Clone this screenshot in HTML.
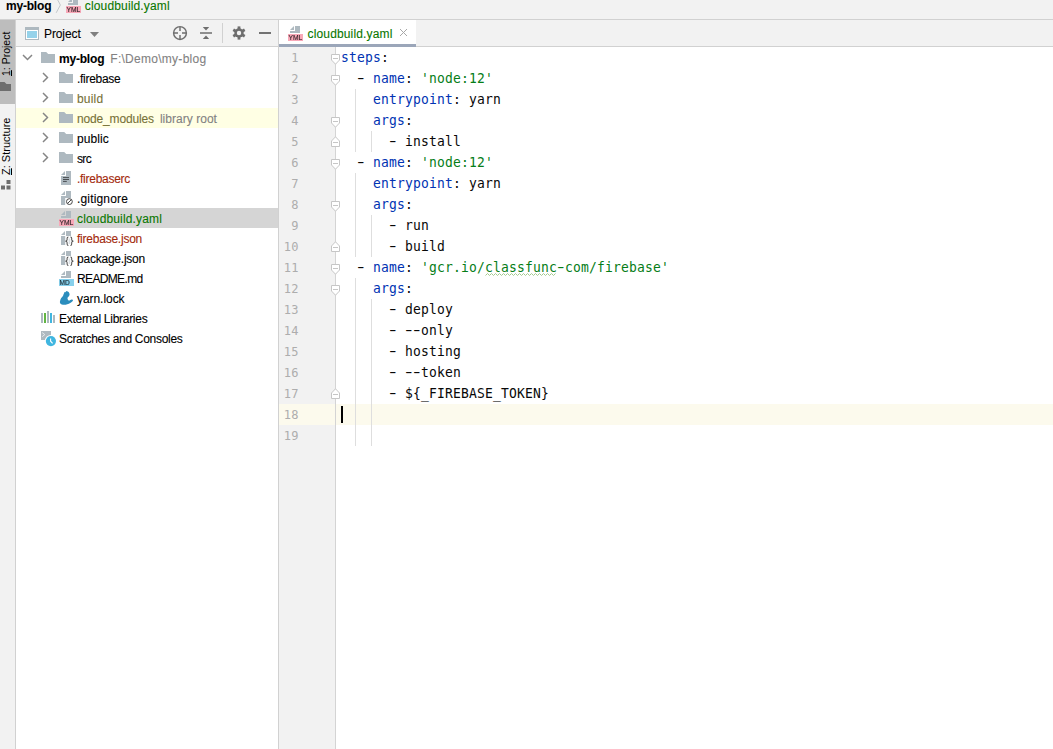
<!DOCTYPE html>
<html><head><meta charset="utf-8"><title>cloudbuild.yaml</title>
<style>
*{box-sizing:border-box}
html,body{margin:0;padding:0}
body{width:1053px;height:749px;overflow:hidden;background:#fff;position:relative;font-family:"Liberation Sans",sans-serif;font-size:12px;color:#000}
.abs,.ic{position:absolute}
.ic{display:block;overflow:visible}
#nav{position:absolute;left:0;top:0;width:1053px;height:19px;background:#f2f2f2}
#navb{position:absolute;left:0;top:19px;width:1053px;height:1px;background:#d1d1d1}
.t{position:absolute;white-space:pre;line-height:16px;height:16px;-webkit-text-stroke:0.1px currentColor}
#strip{position:absolute;left:0;top:20px;width:15px;height:729px;background:#f2f2f2}
#stripb{position:absolute;left:15px;top:20px;width:1px;height:729px;background:#d1d1d1}
#sel1{position:absolute;left:0;top:20px;width:15px;height:84px;background:#bdbdbd}
.vt{position:absolute;white-space:pre;transform-origin:0 0;transform:rotate(-90deg);line-height:14px;height:14px;font-size:10.5px}
#ph{position:absolute;left:16px;top:20px;width:262px;height:26px;background:#f2f2f2}
#phb{position:absolute;left:16px;top:46px;width:262px;height:1px;background:#d1d1d1}
#pr{position:absolute;left:278px;top:20px;width:1px;height:729px;background:#d1d1d1}
.row{position:absolute;left:16px;width:262px;height:20px}
#tabs{position:absolute;left:279px;top:20px;width:774px;height:26px;background:#f2f2f2}
#tabsb{position:absolute;left:279px;top:46px;width:774px;height:1px;background:#d1d1d1}
#tab{position:absolute;left:279px;top:20px;width:137px;height:24px;background:#fff}
#tabu{position:absolute;left:279px;top:44px;width:137px;height:3px;background:#9ba6b9}
#gut{position:absolute;left:279px;top:47px;width:56px;height:702px;background:#f2f2f2}
#gutb{position:absolute;left:335px;top:47px;width:1px;height:702px;background:#d4d4d4}
#cur{position:absolute;left:279px;top:404px;width:774px;height:21px;background:#fcfaed}
.ln{position:absolute;left:279px;width:19.7px;text-align:right;font-family:"DejaVu Sans Mono","Liberation Mono",monospace;font-size:12px;letter-spacing:0.2px;line-height:21px;height:21px;color:#adadad;white-space:pre;padding-top:0.5px}
.cl{position:absolute;left:341px;font-family:"DejaVu Sans Mono","Liberation Mono",monospace;font-size:13px;line-height:21px;height:21px;white-space:pre;letter-spacing:0.174px;color:#080808;transform:scaleY(1.13);transform-origin:0 15px}
.h{display:inline-block;transform:scaleX(1.6)}
.k{color:#0033b3}.s{color:#067d17}
.g{position:absolute;width:1px;background:#dedede}
.wavy{text-decoration:underline wavy #b9c6a0;text-decoration-thickness:1px;text-underline-offset:2px}
</style></head><body>

<div id="nav"></div><div id="navb"></div>
<div class="t" style="left:6px;top:-2px;font-weight:bold;letter-spacing:-0.2px">my-blog</div>
<svg class="ic" style="left:55px;top:0" width="8" height="14" viewBox="0 0 8 14"><path d="M1.2 -2.8L5.4 5L1.2 12.8" fill="none" stroke="#c4c8cb" stroke-width="1"/></svg>
<svg class="ic" style="left:65px;top:-3px;will-change:transform" width="16" height="16" viewBox="0 0 16 16"><path d="M8 1H13V8H3V6H8Z" fill="#aeb9c0"/><path d="M7 1V5H3Z" fill="#aeb9c0"/><rect x="1" y="9" width="15" height="7" fill="#f8a8b8"/><text x="1.5" y="15.1" font-family='"Liberation Sans", sans-serif' font-size="7.3" fill="#33252a" stroke="#33252a" stroke-width=".15" style="opacity:.999" textLength="13.8" lengthAdjust="spacingAndGlyphs">YML</text></svg>
<div class="t" style="left:84.8px;top:-2px;color:#0a7700;letter-spacing:0.153px">cloudbuild.yaml</div>
<div id="strip"></div><div id="sel1"></div><div id="stripb"></div>
<div class="vt" style="left:-1px;top:76px"><u>1</u>: Project</div>
<svg class="ic" style="left:0;top:82px" width="11" height="9" viewBox="0 0 11 9"><path d="M0 0H4.5L6.5 2H11V9H0Z" fill="#6e6e6e"/></svg>
<div class="vt" style="left:-1px;top:174.5px;font-size:11px"><u>Z</u>: Structure</div>
<svg class="ic" style="left:1px;top:180px" width="10" height="10" viewBox="0 0 10 10"><rect x="5.5" y="0" width="4" height="4" fill="#6e6e6e"/><rect x="0" y="5.5" width="4" height="4" fill="#6e6e6e"/><rect x="5.5" y="5.5" width="4" height="4" fill="#6e6e6e"/></svg>
<div id="ph"></div><div id="phb"></div><div id="pr"></div>
<svg class="ic" style="left:25px;top:27px" width="14" height="13" viewBox="0 0 14 13"><rect x="0" y="0" width="14" height="13" fill="#aeb9c0"/><rect x="1" y="3" width="12" height="9" fill="#fff"/><rect x="2" y="4" width="10" height="7" fill="#95d2ea"/></svg>
<div class="t" style="left:44px;top:26px;letter-spacing:-0.1px">Project</div>
<svg class="ic" style="left:89.5px;top:32px" width="9" height="5" viewBox="0 0 9 5"><path d="M0 0H9L4.5 5Z" fill="#7f7f7f"/></svg>
<svg class="ic" style="left:172px;top:25px" width="16" height="16" viewBox="0 0 16 16"><circle cx="8" cy="8" r="6.4" fill="none" stroke="#6e6e6e" stroke-width="1.45"/><path d="M8 2V6M8 10V14M2 8H6M10 8H14" stroke="#6e6e6e" stroke-width="1.45"/></svg>
<svg class="ic" style="left:198px;top:25px" width="16" height="16" viewBox="0 0 16 16"><path d="M2 8H14" stroke="#6e6e6e" stroke-width="1.5"/><path d="M4.8 2H11.2L8 5.4Z" fill="#6e6e6e"/><path d="M4.8 14H11.2L8 10.6Z" fill="#6e6e6e"/></svg>
<div class="abs" style="left:222px;top:23px;width:1px;height:20px;background:#d1d1d1"></div>
<svg class="ic" style="left:231px;top:25px" width="16" height="16" viewBox="0 0 16 16"><g fill="#6e6e6e"><circle cx="8" cy="8" r="4.7"/><rect x="6.6" y="1.4" width="2.8" height="3" transform="rotate(0 8 8)"/><rect x="6.6" y="1.4" width="2.8" height="3" transform="rotate(60 8 8)"/><rect x="6.6" y="1.4" width="2.8" height="3" transform="rotate(120 8 8)"/><rect x="6.6" y="1.4" width="2.8" height="3" transform="rotate(180 8 8)"/><rect x="6.6" y="1.4" width="2.8" height="3" transform="rotate(240 8 8)"/><rect x="6.6" y="1.4" width="2.8" height="3" transform="rotate(300 8 8)"/></g><circle cx="8" cy="8" r="2.2" fill="#f2f2f2"/></svg>
<div class="abs" style="left:259px;top:32px;width:12px;height:2px;background:#727272"></div>
<svg class="ic" style="left:22px;top:54px" width="11" height="7" viewBox="0 0 11 7"><path d="M1 1L5.5 5.5L10 1" fill="none" stroke="#858585" stroke-width="1.45"/></svg>
<svg class="ic" style="left:41px;top:52px" width="14" height="11" viewBox="0 0 14 11"><path d="M0 0H5.2L7.2 2H14V11H0Z" fill="#aeb9c0"/></svg>
<div class="t" style="left:59px;top:51px;color:#000;font-weight:bold;letter-spacing:-0.2px">my-blog</div>
<div class="t" style="left:110.3px;top:51px;color:#828282;letter-spacing:0.273px">F:\Demo\my-blog</div>
<svg class="ic" style="left:42px;top:72px" width="7" height="11" viewBox="0 0 7 11"><path d="M1 1L5.5 5.5L1 10" fill="none" stroke="#858585" stroke-width="1.45"/></svg>
<svg class="ic" style="left:59px;top:72px" width="14" height="11" viewBox="0 0 14 11"><path d="M0 0H5.2L7.2 2H14V11H0Z" fill="#aeb9c0"/></svg>
<div class="t" style="left:77px;top:71px;color:#000;letter-spacing:-0.289px">.firebase</div>
<svg class="ic" style="left:42px;top:92px" width="7" height="11" viewBox="0 0 7 11"><path d="M1 1L5.5 5.5L1 10" fill="none" stroke="#858585" stroke-width="1.45"/></svg>
<svg class="ic" style="left:59px;top:92px" width="14" height="11" viewBox="0 0 14 11"><path d="M0 0H5.2L7.2 2H14V11H0Z" fill="#aeb9c0"/></svg>
<div class="t" style="left:77px;top:91px;color:#777238;letter-spacing:0.18px">build</div>
<div class="row" style="top:108px;background:#ffffe4"></div>
<svg class="ic" style="left:42px;top:112px" width="7" height="11" viewBox="0 0 7 11"><path d="M1 1L5.5 5.5L1 10" fill="none" stroke="#858585" stroke-width="1.45"/></svg>
<svg class="ic" style="left:59px;top:112px" width="14" height="11" viewBox="0 0 14 11"><path d="M0 0H5.2L7.2 2H14V11H0Z" fill="#aeb9c0"/></svg>
<div class="t" style="left:77px;top:111px;color:#777238;letter-spacing:-0.15px">node_modules</div>
<div class="t" style="left:159.9px;top:111px;color:#828282;letter-spacing:0.033px">library root</div>
<svg class="ic" style="left:42px;top:132px" width="7" height="11" viewBox="0 0 7 11"><path d="M1 1L5.5 5.5L1 10" fill="none" stroke="#858585" stroke-width="1.45"/></svg>
<svg class="ic" style="left:59px;top:132px" width="14" height="11" viewBox="0 0 14 11"><path d="M0 0H5.2L7.2 2H14V11H0Z" fill="#aeb9c0"/></svg>
<div class="t" style="left:77px;top:131px;color:#000;letter-spacing:0.1px">public</div>
<svg class="ic" style="left:42px;top:152px" width="7" height="11" viewBox="0 0 7 11"><path d="M1 1L5.5 5.5L1 10" fill="none" stroke="#858585" stroke-width="1.45"/></svg>
<svg class="ic" style="left:59px;top:152px" width="14" height="11" viewBox="0 0 14 11"><path d="M0 0H5.2L7.2 2H14V11H0Z" fill="#aeb9c0"/></svg>
<div class="t" style="left:77px;top:151px;color:#000;letter-spacing:-0.667px">src</div>
<svg class="ic" style="left:58px;top:170px" width="16" height="16" viewBox="0 0 16 16"><path d="M8 1H13V15H3V6H8Z" fill="#aeb9c0"/><path d="M7 1V5H3Z" fill="#aeb9c0"/><path d="M5 7.6H11M5 9.5H11M5 11.4H8.8" stroke="#2f3336" stroke-width="1" opacity=".8"/></svg>
<div class="t" style="left:77px;top:171px;color:#a32a0c;letter-spacing:-0.273px">.firebaserc</div>
<svg class="ic" style="left:58px;top:190px" width="16" height="16" viewBox="0 0 16 16"><path d="M8 1H13V8H7.2V15H3V6H8Z" fill="#aeb9c0"/><path d="M7 1V5H3Z" fill="#aeb9c0"/><circle cx="11.4" cy="11.6" r="2.9" fill="#fff" stroke="#454545" stroke-width="1"/><path d="M9.4 13.6L13.4 9.6" stroke="#454545" stroke-width="1"/></svg>
<div class="t" style="left:77px;top:191px;color:#000;letter-spacing:0.16px">.gitignore</div>
<div class="row" style="top:208px;background:#d5d5d5"></div>
<svg class="ic" style="left:58px;top:210px;will-change:transform" width="16" height="16" viewBox="0 0 16 16"><path d="M8 1H13V8H3V6H8Z" fill="#aeb9c0"/><path d="M7 1V5H3Z" fill="#aeb9c0"/><rect x="1" y="9" width="15" height="7" fill="#f8a8b8"/><text x="1.5" y="15.1" font-family='"Liberation Sans", sans-serif' font-size="7.3" fill="#33252a" stroke="#33252a" stroke-width=".15" style="opacity:.999" textLength="13.8" lengthAdjust="spacingAndGlyphs">YML</text></svg>
<div class="t" style="left:77px;top:211px;color:#0a7700;letter-spacing:0.153px">cloudbuild.yaml</div>
<svg class="ic" style="left:58px;top:230px" width="17" height="16" viewBox="0 0 17 16"><path d="M8 1H13V6H7.2V15H3V6H8Z" fill="#aeb9c0"/><path d="M7 1V5H3Z" fill="#aeb9c0"/><rect x="10.6" y="8.4" width="1.6" height="5.6" fill="#aeb9c0" opacity=".45"/><path d="M10.4 6.9C9.4 6.9 9.1 7.4 9.1 8.3V9.8C9.1 10.6 8.6 11.1 7.4 11.2C8.6 11.3 9.1 11.8 9.1 12.6V14.1C9.1 15 9.4 15.5 10.4 15.5M12.4 6.9C13.4 6.9 13.7 7.4 13.7 8.3V9.8C13.7 10.6 14.2 11.1 15.4 11.2C14.2 11.3 13.7 11.8 13.7 12.6V14.1C13.7 15 13.4 15.5 12.4 15.5" fill="none" stroke="#505050" stroke-width="1.05"/></svg>
<div class="t" style="left:77px;top:231px;color:#a32a0c;letter-spacing:-0.231px">firebase.json</div>
<svg class="ic" style="left:58px;top:250px" width="17" height="16" viewBox="0 0 17 16"><path d="M8 1H13V6H7.2V15H3V6H8Z" fill="#aeb9c0"/><path d="M7 1V5H3Z" fill="#aeb9c0"/><rect x="10.6" y="8.4" width="1.6" height="5.6" fill="#aeb9c0" opacity=".45"/><path d="M10.4 6.9C9.4 6.9 9.1 7.4 9.1 8.3V9.8C9.1 10.6 8.6 11.1 7.4 11.2C8.6 11.3 9.1 11.8 9.1 12.6V14.1C9.1 15 9.4 15.5 10.4 15.5M12.4 6.9C13.4 6.9 13.7 7.4 13.7 8.3V9.8C13.7 10.6 14.2 11.1 15.4 11.2C14.2 11.3 13.7 11.8 13.7 12.6V14.1C13.7 15 13.4 15.5 12.4 15.5" fill="none" stroke="#505050" stroke-width="1.05"/></svg>
<div class="t" style="left:77px;top:251px;color:#000;letter-spacing:-0.225px">package.json</div>
<svg class="ic" style="left:58px;top:270px;will-change:transform" width="16" height="16" viewBox="0 0 16 16"><path d="M8 1H13V8H3V6H8Z" fill="#aeb9c0"/><path d="M7 1V5H3Z" fill="#aeb9c0"/><rect x="1" y="9" width="15" height="7" fill="#87d0ec"/><text x="1.5" y="15.1" font-family='"Liberation Sans", sans-serif' font-size="7.3" fill="#1e2b32" stroke="#1e2b32" stroke-width=".15" style="opacity:.999" textLength="10.2" lengthAdjust="spacingAndGlyphs">MD</text></svg>
<div class="t" style="left:77px;top:271px;color:#000;letter-spacing:-0.644px">README.md</div>
<svg class="ic" style="left:58px;top:290px" width="16" height="16" viewBox="0 0 16 16"><path d="M8.7 1L9.7 1.6C10.5 1.8 11 2.3 11.2 2.9C11.7 3.7 11.7 4.7 11.3 5.5C10.9 6.3 10.1 7 9.5 7.7C9.4 8.8 9.8 9.8 10.6 10.4C11.4 10.8 12.6 9.9 13.6 9.5C14.3 9.3 15 9.6 15 10.3C15 10.9 14.6 11.4 14 11.8C13.2 12.4 12.2 13 11.3 13.4C10 14 8.4 14.6 6.5 14.7C5 14.8 3.4 14.6 2.6 13.8C1.9 13 1.8 12 2 11.2C2.2 10 2.7 9 3.2 8.1C3.8 7.2 4.6 6.4 5.2 5.4C5.4 4.6 5.6 3.6 6.2 2.9L6.4 1.9L7.4 2.2C7.8 1.8 8.2 1.4 8.7 1Z" fill="#2b8dbd"/></svg>
<div class="t" style="left:77px;top:291px;color:#000;letter-spacing:-0.056px">yarn.lock</div>
<svg class="ic" style="left:40px;top:310px" width="16" height="16" viewBox="0 0 16 16"><rect x="1" y="3" width="2" height="10" fill="#aeb9c0"/><rect x="4" y="3" width="2" height="10" fill="#62b543"/><rect x="7" y="1" width="2" height="12" fill="#aeb9c0"/><rect x="10" y="3" width="2" height="10" fill="#40b6e0"/><rect x="13" y="5" width="2" height="8" fill="#aeb9c0"/></svg>
<div class="t" style="left:59px;top:311px;color:#000;letter-spacing:-0.278px">External Libraries</div>
<svg class="ic" style="left:40px;top:330px" width="17" height="17" viewBox="0 0 17 17"><rect x="1" y="1" width="10" height="9" fill="#aeb9c0"/><path d="M2.2 2.6L4.8 4.6L2.2 6.6" fill="none" stroke="#e8ecee" stroke-width="1"/><circle cx="10.9" cy="11.1" r="6.1" fill="#fff"/><circle cx="10.9" cy="11.1" r="5.1" fill="#40b6e0"/><path d="M10.6 8.4V11.2L12.6 13.4" fill="none" stroke="#fff" stroke-width="1.1"/></svg>
<div class="t" style="left:59px;top:331px;color:#000;letter-spacing:-0.3px">Scratches and Consoles</div>
<div id="tabs"></div><div id="tabsb"></div><div id="tab"></div><div id="tabu"></div>
<svg class="ic" style="left:287px;top:25px;will-change:transform" width="16" height="16" viewBox="0 0 16 16"><path d="M8 1H13V8H3V6H8Z" fill="#aeb9c0"/><path d="M7 1V5H3Z" fill="#aeb9c0"/><rect x="1" y="9" width="15" height="7" fill="#f8a8b8"/><text x="1.5" y="15.1" font-family='"Liberation Sans", sans-serif' font-size="7.3" fill="#33252a" stroke="#33252a" stroke-width=".15" style="opacity:.999" textLength="13.8" lengthAdjust="spacingAndGlyphs">YML</text></svg>
<div class="t" style="left:307.5px;top:26px;color:#0a7700;letter-spacing:0.153px">cloudbuild.yaml</div>
<svg class="ic" style="left:399px;top:28px" width="9" height="9" viewBox="0 0 9 9"><path d="M1 1L8 8M8 1L1 8" stroke="#a8a8a8" stroke-width="1"/></svg>
<div id="gut"></div><div id="cur"></div><div id="gutb"></div>
<div class="ln" style="top:47px">1</div>
<div class="cl" style="top:47px"><span class="k">steps</span>:</div>
<div class="ln" style="top:68px">2</div>
<div class="cl" style="top:68px">  <span class="h">-</span> <span class="k">name</span>: <span class="s">'node:12'</span></div>
<div class="ln" style="top:89px">3</div>
<div class="cl" style="top:89px">    <span class="k">entrypoint</span>: yarn</div>
<div class="ln" style="top:110px">4</div>
<div class="cl" style="top:110px">    <span class="k">args</span>:</div>
<div class="ln" style="top:131px">5</div>
<div class="cl" style="top:131px">      <span class="h">-</span> install</div>
<div class="ln" style="top:152px">6</div>
<div class="cl" style="top:152px">  <span class="h">-</span> <span class="k">name</span>: <span class="s">'node:12'</span></div>
<div class="ln" style="top:173px">7</div>
<div class="cl" style="top:173px">    <span class="k">entrypoint</span>: yarn</div>
<div class="ln" style="top:194px">8</div>
<div class="cl" style="top:194px">    <span class="k">args</span>:</div>
<div class="ln" style="top:215px">9</div>
<div class="cl" style="top:215px">      <span class="h">-</span> run</div>
<div class="ln" style="top:236px">10</div>
<div class="cl" style="top:236px">      <span class="h">-</span> build</div>
<div class="ln" style="top:257px">11</div>
<div class="cl" style="top:257px">  <span class="h">-</span> <span class="k">name</span>: <span class="s">'gcr.io/classfunc<span class="h">-</span>com/firebase'</span></div>
<div class="ln" style="top:278px">12</div>
<div class="cl" style="top:278px">    <span class="k">args</span>:</div>
<div class="ln" style="top:299px">13</div>
<div class="cl" style="top:299px">      <span class="h">-</span> deploy</div>
<div class="ln" style="top:320px">14</div>
<div class="cl" style="top:320px">      <span class="h">-</span> <span class="h">-</span><span class="h">-</span>only</div>
<div class="ln" style="top:341px">15</div>
<div class="cl" style="top:341px">      <span class="h">-</span> hosting</div>
<div class="ln" style="top:362px">16</div>
<div class="cl" style="top:362px">      <span class="h">-</span> <span class="h">-</span><span class="h">-</span>token</div>
<div class="ln" style="top:383px">17</div>
<div class="cl" style="top:383px">      <span class="h">-</span> ${_FIREBASE_TOKEN}</div>
<div class="ln" style="top:404px">18</div>
<div class="ln" style="top:425px">19</div>
<svg class="ic" style="left:0;top:0" width="1053" height="749"><polyline points="485.5,275.5 487.5,273.5 489.5,275.5 491.5,273.5 493.5,275.5 495.5,273.5 497.5,275.5 499.5,273.5 501.5,275.5 503.5,273.5 505.5,275.5 507.5,273.5 509.5,275.5 511.5,273.5 513.5,275.5 515.5,273.5 517.5,275.5 519.5,273.5 521.5,275.5 523.5,273.5 525.5,275.5 527.5,273.5 529.5,275.5 531.5,273.5 533.5,275.5 535.5,273.5 537.5,275.5 539.5,273.5 541.5,275.5 543.5,273.5 545.5,275.5 547.5,273.5 549.5,275.5 551.5,273.5 553.5,275.5 555.5,273.5" fill="none" stroke="#a4c991" stroke-width="1"/></svg>
<div class="g" style="left:355px;top:89px;height:63px"></div>
<div class="g" style="left:371px;top:131px;height:21px"></div>
<div class="g" style="left:355px;top:173px;height:84px"></div>
<div class="g" style="left:371px;top:215px;height:42px"></div>
<div class="g" style="left:355px;top:278px;height:168px"></div>
<div class="g" style="left:371px;top:299px;height:147px"></div>
<svg class="ic" style="left:331px;top:54px" width="9" height="11" viewBox="0 0 9 11"><path d="M0.5 0.5H8.5V6L4.5 10.2L0.5 6Z" fill="#fff" stroke="#c6c6c6" stroke-width="1"/><path d="M2 4.5H7" stroke="#c6c6c6" stroke-width="1"/></svg>
<svg class="ic" style="left:331px;top:75px" width="9" height="11" viewBox="0 0 9 11"><path d="M0.5 0.5H8.5V6L4.5 10.2L0.5 6Z" fill="#fff" stroke="#c6c6c6" stroke-width="1"/><path d="M2 4.5H7" stroke="#c6c6c6" stroke-width="1"/></svg>
<svg class="ic" style="left:331px;top:117px" width="9" height="11" viewBox="0 0 9 11"><path d="M0.5 0.5H8.5V6L4.5 10.2L0.5 6Z" fill="#fff" stroke="#c6c6c6" stroke-width="1"/><path d="M2 4.5H7" stroke="#c6c6c6" stroke-width="1"/></svg>
<svg class="ic" style="left:331px;top:159px" width="9" height="11" viewBox="0 0 9 11"><path d="M0.5 0.5H8.5V6L4.5 10.2L0.5 6Z" fill="#fff" stroke="#c6c6c6" stroke-width="1"/><path d="M2 4.5H7" stroke="#c6c6c6" stroke-width="1"/></svg>
<svg class="ic" style="left:331px;top:201px" width="9" height="11" viewBox="0 0 9 11"><path d="M0.5 0.5H8.5V6L4.5 10.2L0.5 6Z" fill="#fff" stroke="#c6c6c6" stroke-width="1"/><path d="M2 4.5H7" stroke="#c6c6c6" stroke-width="1"/></svg>
<svg class="ic" style="left:331px;top:264px" width="9" height="11" viewBox="0 0 9 11"><path d="M0.5 0.5H8.5V6L4.5 10.2L0.5 6Z" fill="#fff" stroke="#c6c6c6" stroke-width="1"/><path d="M2 4.5H7" stroke="#c6c6c6" stroke-width="1"/></svg>
<svg class="ic" style="left:331px;top:285px" width="9" height="11" viewBox="0 0 9 11"><path d="M0.5 0.5H8.5V6L4.5 10.2L0.5 6Z" fill="#fff" stroke="#c6c6c6" stroke-width="1"/><path d="M2 4.5H7" stroke="#c6c6c6" stroke-width="1"/></svg>
<svg class="ic" style="left:331px;top:136px" width="9" height="11" viewBox="0 0 9 11"><path d="M0.5 10.5H8.5V5L4.5 0.8L0.5 5Z" fill="#fff" stroke="#c6c6c6" stroke-width="1"/><path d="M2 6.5H7" stroke="#c6c6c6" stroke-width="1"/></svg>
<svg class="ic" style="left:331px;top:241px" width="9" height="11" viewBox="0 0 9 11"><path d="M0.5 10.5H8.5V5L4.5 0.8L0.5 5Z" fill="#fff" stroke="#c6c6c6" stroke-width="1"/><path d="M2 6.5H7" stroke="#c6c6c6" stroke-width="1"/></svg>
<svg class="ic" style="left:331px;top:388px" width="9" height="11" viewBox="0 0 9 11"><path d="M0.5 10.5H8.5V5L4.5 0.8L0.5 5Z" fill="#fff" stroke="#c6c6c6" stroke-width="1"/><path d="M2 6.5H7" stroke="#c6c6c6" stroke-width="1"/></svg>
<div class="abs" style="left:341px;top:406px;width:2px;height:17px;background:#000"></div>

</body></html>
